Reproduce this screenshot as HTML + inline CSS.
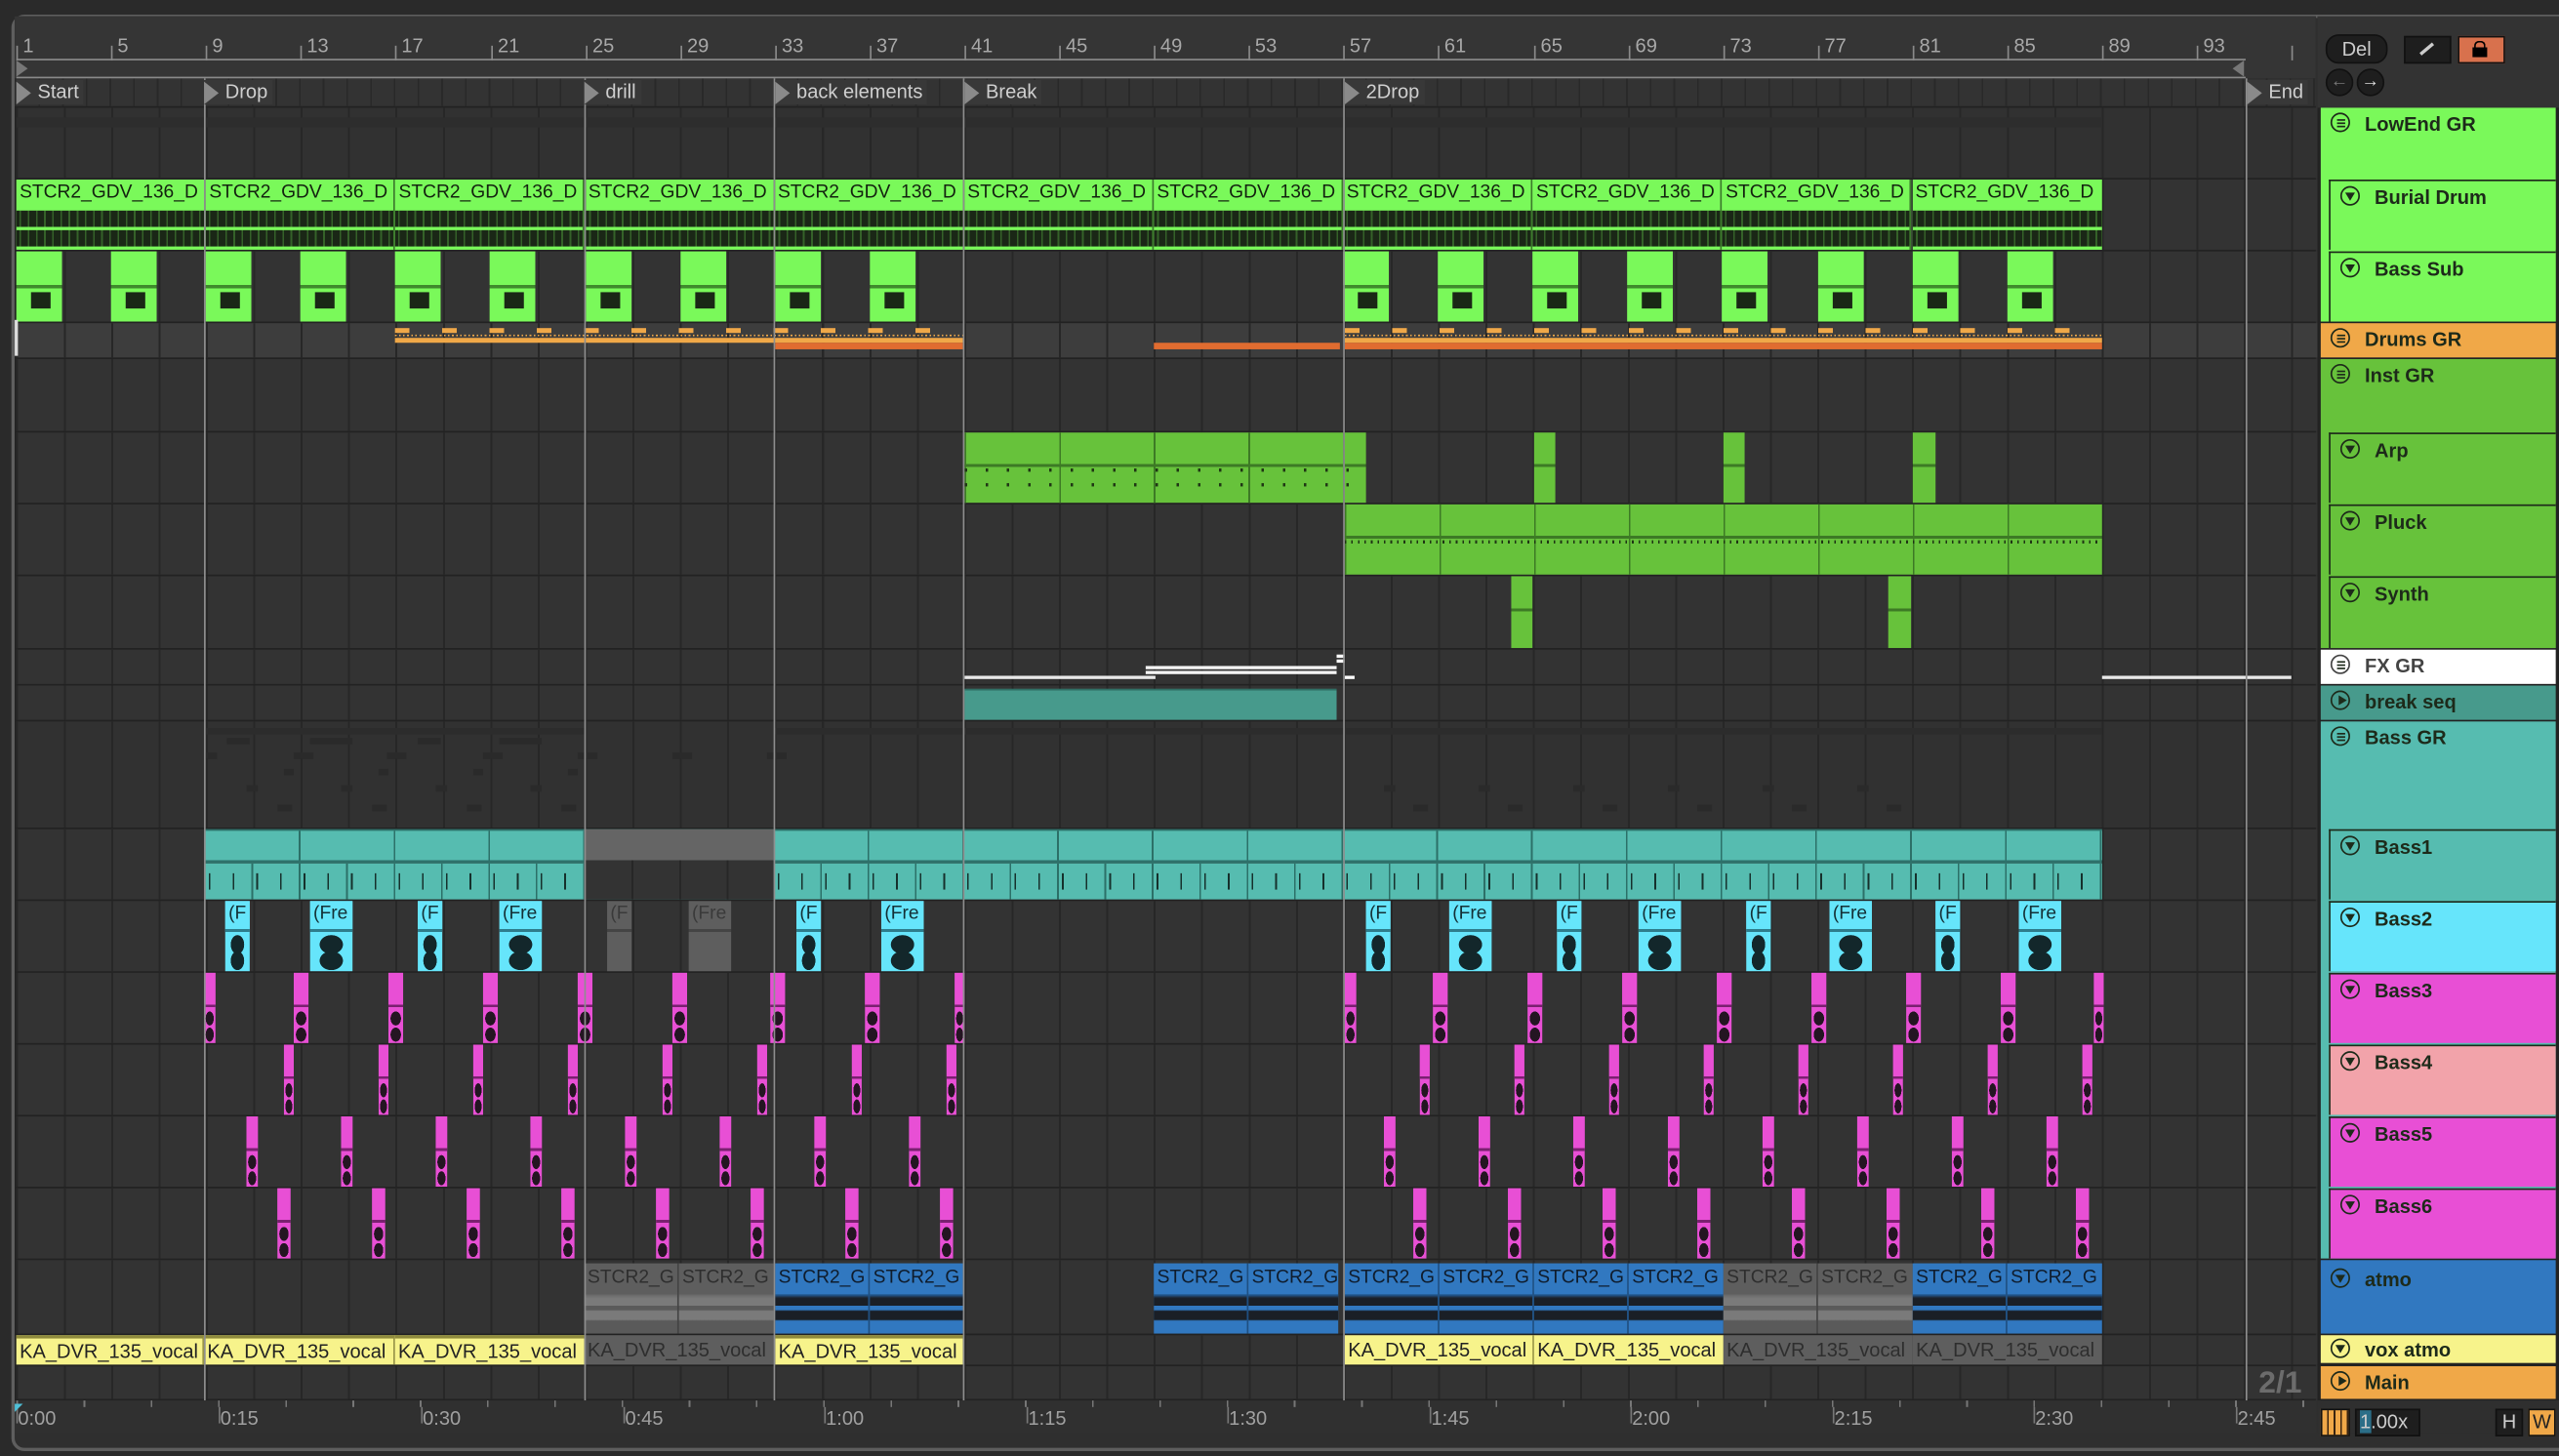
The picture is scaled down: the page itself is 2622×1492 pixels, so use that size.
<!DOCTYPE html>
<html><head><meta charset="utf-8">
<style>
html,body{margin:0;padding:0;background:#262626;overflow:hidden;width:2622px;height:1492px}
#s{position:absolute;left:0;top:0;width:1568px;height:892px;transform-origin:0 0;transform:scale(1.67219,1.67265);font-family:"Liberation Sans",sans-serif;}
.a{position:absolute}
#panel{position:absolute;left:7px;top:9px;width:1570px;height:880px;border:2px solid #5e5e5e;border-radius:8px;background:#2f2f2f;box-sizing:border-box}
.num{position:absolute;top:21px;font-size:12px;color:#a8a8a8;font-family:"Liberation Sans Narrow","Liberation Sans",sans-serif}
.tk{position:absolute;top:28px;width:1px;height:9px;background:#8a8a8a}
.row{position:absolute;left:10px;width:1410px;background:#333;
 background-image:repeating-linear-gradient(90deg,#272727 0 1.2px,transparent 1.2px 29.04px);}
.c{position:absolute;top:0;height:100%;box-sizing:border-box;overflow:hidden}
.h{position:absolute;left:0;right:0;top:0;font-size:11.5px;line-height:17px;padding-left:2px;white-space:nowrap;overflow:hidden;font-family:"Liberation Sans Narrow","Liberation Sans",sans-serif}
.w{position:absolute;left:0;right:0;bottom:0}
.bw{position:absolute;left:0;right:0;top:19px;height:22px;background-color:#1a2716;background-image:repeating-linear-gradient(90deg,transparent 0 2px,rgba(122,249,90,.28) 2px 3px,transparent 3px 5px)}
.bw:after{content:"";position:absolute;left:0;right:0;top:10px;height:2px;background:#7af95a}
.loc{position:absolute;top:48px;width:1px;height:810px;background:#8e8e8e}
.lab{position:absolute;top:49px;font-size:12px;color:#cfcfcf;height:15px;line-height:15px;padding-left:13px;background:#383838}
.lab:before{content:"";position:absolute;left:0;top:1px;border-left:9px solid #8a8a8a;border-top:7px solid transparent;border-bottom:7px solid transparent}
.th{position:absolute;box-sizing:border-box;font-weight:bold;font-size:12px;color:#1d2a1a;padding-left:27px;padding-top:3px;line-height:14px}
.ic{position:absolute;left:6px;top:3px;width:12px;height:12px;border:1.4px solid #1d2a1a;border-radius:50%;box-sizing:border-box}
.dn:after{content:"";position:absolute;left:2.3px;top:3.2px;border-top:5px solid #1d2a1a;border-left:3.2px solid transparent;border-right:3.2px solid transparent}
.pl:after{content:"";position:absolute;left:3.6px;top:2.3px;border-left:5px solid #1d2a1a;border-top:3.2px solid transparent;border-bottom:3.2px solid transparent}
.gr:after{content:"";position:absolute;left:2.5px;top:2.6px;width:5px;height:1.2px;background:#1d2a1a;box-shadow:0 2px 0 #1d2a1a,0 4px 0 #1d2a1a}
.tl{position:absolute;top:862px;font-size:12px;color:#a0a0a0}
.bt{position:absolute;top:868px;width:1px;height:6px;background:#777}
.gb{position:absolute;height:4px;background:#2a2a2a}
</style></head><body><div id="s">
<div class="a" style="left:0;top:0;width:1568px;height:892px;background:#2a2a2a"></div>
<div id="panel"></div>
<div class="a" style="left:9px;top:10px;width:1410px;height:848px;background:#222"></div>
<div class="a" style="left:9px;top:10px;width:1410px;height:38px;background:#353535"></div>
<div class="a" style="left:9px;top:48px;width:1410px;height:17px;background:#333;background-image:repeating-linear-gradient(90deg,#292929 0 1px,transparent 1px 14.52px)"></div>
<div class="a" style="left:1420px;top:10px;width:148px;height:56px;background:#333"></div>

<div class="tk" style="left:10px"></div><div class="num" style="left:14px">1</div>
<div class="tk" style="left:68px"></div><div class="num" style="left:72px">5</div>
<div class="tk" style="left:126px"></div><div class="num" style="left:130px">9</div>
<div class="tk" style="left:184px"></div><div class="num" style="left:188px">13</div>
<div class="tk" style="left:242px"></div><div class="num" style="left:246px">17</div>
<div class="tk" style="left:301px"></div><div class="num" style="left:305px">21</div>
<div class="tk" style="left:359px"></div><div class="num" style="left:363px">25</div>
<div class="tk" style="left:417px"></div><div class="num" style="left:421px">29</div>
<div class="tk" style="left:475px"></div><div class="num" style="left:479px">33</div>
<div class="tk" style="left:533px"></div><div class="num" style="left:537px">37</div>
<div class="tk" style="left:591px"></div><div class="num" style="left:595px">41</div>
<div class="tk" style="left:649px"></div><div class="num" style="left:653px">45</div>
<div class="tk" style="left:707px"></div><div class="num" style="left:711px">49</div>
<div class="tk" style="left:765px"></div><div class="num" style="left:769px">53</div>
<div class="tk" style="left:823px"></div><div class="num" style="left:827px">57</div>
<div class="tk" style="left:881px"></div><div class="num" style="left:885px">61</div>
<div class="tk" style="left:940px"></div><div class="num" style="left:944px">65</div>
<div class="tk" style="left:998px"></div><div class="num" style="left:1002px">69</div>
<div class="tk" style="left:1056px"></div><div class="num" style="left:1060px">73</div>
<div class="tk" style="left:1114px"></div><div class="num" style="left:1118px">77</div>
<div class="tk" style="left:1172px"></div><div class="num" style="left:1176px">81</div>
<div class="tk" style="left:1230px"></div><div class="num" style="left:1234px">85</div>
<div class="tk" style="left:1288px"></div><div class="num" style="left:1292px">89</div>
<div class="tk" style="left:1346px"></div><div class="num" style="left:1350px">93</div>
<div class="tk" style="left:1404px"></div>
<div class="a" style="left:10px;top:36px;width:1366px;height:1px;background:#8a8a8a"></div>
<div class="a" style="left:10px;top:47px;width:1366px;height:1px;background:#8a8a8a"></div>
<div class="a" style="left:10px;top:37px;width:0;height:0;border-left:7px solid #777;border-top:5px solid transparent;border-bottom:5px solid transparent"></div>
<div class="a" style="left:1368px;top:37px;width:0;height:0;border-right:7px solid #777;border-top:5px solid transparent;border-bottom:5px solid transparent"></div>

<div class="row" style="top:66px;height:43px;background-color:#313131"></div>
<div class="a" style="left:10px;top:72px;width:1278px;height:6px;background:#2d2d2d"></div>
<div class="row" style="top:110px;height:43px"></div>
<div class="row" style="top:154px;height:43px"></div>
<div class="row" style="top:198px;height:21px;background-color:#3d3d3d"></div>
<div class="row" style="top:220px;height:44px"></div>
<div class="row" style="top:265px;height:43px"></div>
<div class="row" style="top:309px;height:43px"></div>
<div class="row" style="top:353px;height:44px"></div>
<div class="row" style="top:398px;height:21px"></div>
<div class="row" style="top:420px;height:21px"></div>
<div class="row" style="top:442px;height:65px;background-color:#313131"></div>
<div class="a" style="left:125px;top:446px;width:233px;height:4px;background:#2c2c2c"></div>
<div class="a" style="left:475px;top:446px;width:813px;height:4px;background:#2c2c2c"></div>
<div class="gb" style="left:139px;top:452px;width:14px"></div><div class="gb" style="left:190px;top:452px;width:26px"></div><div class="gb" style="left:256px;top:452px;width:14px"></div><div class="gb" style="left:306px;top:452px;width:26px"></div>
<div class="gb" style="left:126px;top:461px;width:7px"></div><div class="gb" style="left:180px;top:461px;width:12px"></div><div class="gb" style="left:237px;top:461px;width:12px"></div><div class="gb" style="left:296px;top:461px;width:12px"></div><div class="gb" style="left:354px;top:461px;width:12px"></div><div class="gb" style="left:412px;top:461px;width:12px"></div><div class="gb" style="left:470px;top:461px;width:12px"></div>
<div class="gb" style="left:174px;top:471px;width:6px"></div><div class="gb" style="left:232px;top:471px;width:6px"></div><div class="gb" style="left:290px;top:471px;width:6px"></div><div class="gb" style="left:348px;top:471px;width:6px"></div>
<div class="gb" style="left:151px;top:481px;width:7px"></div><div class="gb" style="left:209px;top:481px;width:7px"></div><div class="gb" style="left:267px;top:481px;width:7px"></div><div class="gb" style="left:325px;top:481px;width:7px"></div>
<div class="gb" style="left:170px;top:493px;width:9px"></div><div class="gb" style="left:228px;top:493px;width:9px"></div><div class="gb" style="left:286px;top:493px;width:9px"></div><div class="gb" style="left:344px;top:493px;width:9px"></div>
<div class="gb" style="left:848px;top:481px;width:7px"></div><div class="gb" style="left:906px;top:481px;width:7px"></div><div class="gb" style="left:964px;top:481px;width:7px"></div><div class="gb" style="left:1022px;top:481px;width:7px"></div><div class="gb" style="left:1080px;top:481px;width:7px"></div><div class="gb" style="left:1138px;top:481px;width:7px"></div>
<div class="gb" style="left:866px;top:493px;width:9px"></div><div class="gb" style="left:924px;top:493px;width:9px"></div><div class="gb" style="left:982px;top:493px;width:9px"></div><div class="gb" style="left:1040px;top:493px;width:9px"></div><div class="gb" style="left:1098px;top:493px;width:9px"></div><div class="gb" style="left:1156px;top:493px;width:9px"></div>
<div class="row" style="top:508px;height:43px"></div>
<div class="row" style="top:552px;height:43px"></div>
<div class="row" style="top:596px;height:43px"></div>
<div class="row" style="top:640px;height:43px"></div>
<div class="row" style="top:684px;height:43px"></div>
<div class="row" style="top:728px;height:43px"></div>
<div class="row" style="top:772px;height:45px"></div>
<div class="row" style="top:818px;height:18px"></div>
<div class="row" style="top:837px;height:20px"></div>

<div class="a" style="left:10px;top:110px;width:1278px;height:43px">
<div class="c" style="left:0;width:116px;background:#7af95a;border-right:1px solid #3c7a2c"><div class="h" style="color:#13220f">STCR2_GDV_136_D</div><div class="bw"></div></div>
<div class="c" style="left:116.2px;width:116px;background:#7af95a;border-right:1px solid #3c7a2c"><div class="h" style="color:#13220f">STCR2_GDV_136_D</div><div class="bw"></div></div>
<div class="c" style="left:232.3px;width:116px;background:#7af95a;border-right:1px solid #3c7a2c"><div class="h" style="color:#13220f">STCR2_GDV_136_D</div><div class="bw"></div></div>
<div class="c" style="left:348.5px;width:116px;background:#7af95a;border-right:1px solid #3c7a2c"><div class="h" style="color:#13220f">STCR2_GDV_136_D</div><div class="bw"></div></div>
<div class="c" style="left:464.6px;width:116px;background:#7af95a;border-right:1px solid #3c7a2c"><div class="h" style="color:#13220f">STCR2_GDV_136_D</div><div class="bw"></div></div>
<div class="c" style="left:580.8px;width:116px;background:#7af95a;border-right:1px solid #3c7a2c"><div class="h" style="color:#13220f">STCR2_GDV_136_D</div><div class="bw"></div></div>
<div class="c" style="left:696.9px;width:116px;background:#7af95a;border-right:1px solid #3c7a2c"><div class="h" style="color:#13220f">STCR2_GDV_136_D</div><div class="bw"></div></div>
<div class="c" style="left:813.1px;width:116px;background:#7af95a;border-right:1px solid #3c7a2c"><div class="h" style="color:#13220f">STCR2_GDV_136_D</div><div class="bw"></div></div>
<div class="c" style="left:929.3px;width:116px;background:#7af95a;border-right:1px solid #3c7a2c"><div class="h" style="color:#13220f">STCR2_GDV_136_D</div><div class="bw"></div></div>
<div class="c" style="left:1045.4px;width:116px;background:#7af95a;border-right:1px solid #3c7a2c"><div class="h" style="color:#13220f">STCR2_GDV_136_D</div><div class="bw"></div></div>
<div class="c" style="left:1161.6px;width:116.4px;background:#7af95a"><div class="h" style="color:#13220f">STCR2_GDV_136_D</div><div class="bw"></div></div>
</div>

<div class="a" style="left:10px;top:154px;width:1278px;height:43px;--b:linear-gradient(#1a2716,#1a2716) 9px 25px/12px 10px no-repeat,linear-gradient(180deg,#7af95a 0 48%,#3f8a2c 48% 53%,#7af95a 53%)">
<div class="c" style="left:0;width:28px;background:var(--b)"></div>
<div class="c" style="left:58.1px;width:28px;background:var(--b)"></div>
<div class="c" style="left:116.2px;width:28px;background:var(--b)"></div>
<div class="c" style="left:174.2px;width:28px;background:var(--b)"></div>
<div class="c" style="left:232.3px;width:28px;background:var(--b)"></div>
<div class="c" style="left:290.4px;width:28px;background:var(--b)"></div>
<div class="c" style="left:348.5px;width:28px;background:var(--b)"></div>
<div class="c" style="left:406.6px;width:28px;background:var(--b)"></div>
<div class="c" style="left:464.6px;width:28px;background:var(--b)"></div>
<div class="c" style="left:522.7px;width:28px;background:var(--b)"></div>
<div class="c" style="left:813.1px;width:28px;background:var(--b)"></div>
<div class="c" style="left:871.2px;width:28px;background:var(--b)"></div>
<div class="c" style="left:929.3px;width:28px;background:var(--b)"></div>
<div class="c" style="left:987.4px;width:28px;background:var(--b)"></div>
<div class="c" style="left:1045.4px;width:28px;background:var(--b)"></div>
<div class="c" style="left:1103.5px;width:28px;background:var(--b)"></div>
<div class="c" style="left:1161.6px;width:28px;background:var(--b)"></div>
<div class="c" style="left:1219.7px;width:28px;background:var(--b)"></div>
</div>

<div class="a" style="left:242px;top:201px;width:348px;height:3px;background:repeating-linear-gradient(90deg,#f0a848 0 9px,transparent 9px 29px)"></div>
<div class="a" style="left:242px;top:205px;width:348px;height:1px;background:repeating-linear-gradient(90deg,#f0a848 0 1px,transparent 1px 2.5px)"></div>
<div class="a" style="left:242px;top:207px;width:348px;height:3px;background:#f0a848"></div>
<div class="a" style="left:475px;top:210px;width:115px;height:4px;background:#e06c30"></div>
<div class="a" style="left:707px;top:210px;width:114px;height:4px;background:#e06c30"></div>
<div class="a" style="left:824px;top:201px;width:464px;height:3px;background:repeating-linear-gradient(90deg,#f0a848 0 9px,transparent 9px 29px)"></div>
<div class="a" style="left:824px;top:205px;width:464px;height:1px;background:repeating-linear-gradient(90deg,#f0a848 0 1px,transparent 1px 2.5px)"></div>
<div class="a" style="left:824px;top:207px;width:464px;height:3px;background:#f0a848"></div>
<div class="a" style="left:824px;top:210px;width:464px;height:4px;background:#e06c30"></div>

<div class="a" style="left:591px;top:265px;width:246px;height:43px;background-image:repeating-linear-gradient(90deg,#3d7a25 0 1px,transparent 1px 58px),linear-gradient(180deg,#67c23b 0 45%,#3d7a25 45% 49%,#67c23b 49%)"></div>
<div class="a" style="left:591px;top:287px;width:246px;height:2px;background:repeating-linear-gradient(90deg,#1f3514 0 1.5px,transparent 1.5px 13px)"></div>
<div class="a" style="left:591px;top:296px;width:246px;height:2px;background:repeating-linear-gradient(90deg,#1f3514 0 1.5px,transparent 1.5px 13px)"></div>
<div class="a" style="left:940px;top:265px;width:13px;height:43px;background:linear-gradient(180deg,#67c23b 0 45%,#3d7a25 45% 49%,#67c23b 49%)"></div>
<div class="a" style="left:1056px;top:265px;width:13px;height:43px;background:linear-gradient(180deg,#67c23b 0 45%,#3d7a25 45% 49%,#67c23b 49%)"></div>
<div class="a" style="left:1172px;top:265px;width:14px;height:43px;background:linear-gradient(180deg,#67c23b 0 45%,#3d7a25 45% 49%,#67c23b 49%)"></div>
<div class="a" style="left:824px;top:309px;width:464px;height:43px;background-image:repeating-linear-gradient(90deg,#3d7a25 0 1px,transparent 1px 58px),linear-gradient(180deg,#67c23b 0 45%,#3d7a25 45% 49%,#67c23b 49%)"></div>
<div class="a" style="left:824px;top:331px;width:464px;height:2px;background:repeating-linear-gradient(90deg,#1f3514 0 1px,transparent 1px 4px)"></div>
<div class="a" style="left:926px;top:353px;width:13px;height:44px;background:linear-gradient(180deg,#67c23b 0 45%,#3d7a25 45% 49%,#67c23b 49%)"></div>
<div class="a" style="left:1157px;top:353px;width:14px;height:44px;background:linear-gradient(180deg,#67c23b 0 45%,#3d7a25 45% 49%,#67c23b 49%)"></div>
<div class="a" style="left:591px;top:414px;width:117px;height:2px;background:#e8e8e8"></div>
<div class="a" style="left:702px;top:408px;width:117px;height:2px;background:#f4f4f4"></div>
<div class="a" style="left:702px;top:411px;width:117px;height:2px;background:#f4f4f4"></div>
<div class="a" style="left:819px;top:401px;width:5px;height:2px;background:#fff"></div>
<div class="a" style="left:819px;top:404px;width:5px;height:2px;background:#fff"></div>
<div class="a" style="left:824px;top:414px;width:6px;height:2px;background:#fff"></div>
<div class="a" style="left:1288px;top:414px;width:116px;height:2px;background:#e8e8e8"></div>
<div class="a" style="left:591px;top:422px;width:228px;height:18px;background:#479a8c;border-top:1px solid #2f6e64"></div>

<div class="a" style="left:125px;top:508px;width:1163px;height:19px;background-image:repeating-linear-gradient(90deg,#2c7068 0 1px,transparent 1px 58.08px);background-color:#56bcb0;border-top:1px solid #2e716a;box-sizing:border-box"></div>
<div class="a" style="left:125px;top:527px;width:1163px;height:2px;background:#2e716a"></div>
<div class="a" style="left:125px;top:529px;width:1163px;height:22px;background-image:repeating-linear-gradient(90deg,#2c7068 0 1px,transparent 1px 29.04px);background-color:#56bcb0"></div>
<div class="a" style="left:125px;top:535px;width:1163px;height:10px;background:repeating-linear-gradient(90deg,transparent 0 3px,#16302c 3px 4px,transparent 4px 14.52px)"></div>
<div class="a" style="left:358px;top:508px;width:116px;height:19px;background:#656565"></div>
<div class="a" style="left:358px;top:527px;width:116px;height:24px;background:#333;background-image:repeating-linear-gradient(90deg,#272727 0 1.2px,transparent 1.2px 29.04px)"></div>

<div class="a" style="left:10px;top:552px;width:1278px;height:43px;--cy:linear-gradient(180deg,#66e5fb 0 40%,#2e7d8c 40% 44%,transparent 44%),radial-gradient(ellipse 45% 22% at 50% 62%,#13272b 60%,transparent 62%),radial-gradient(ellipse 45% 22% at 50% 85%,#13272b 60%,#66e5fb 62%)">
<div class="c" style="left:128px;width:15px;background:var(--cy)"><div class="h" style="color:#143036">(F</div></div>
<div class="c" style="left:180px;width:26px;background:var(--cy)"><div class="h" style="color:#143036">(Fre</div></div>
<div class="c" style="left:246px;width:15px;background:var(--cy)"><div class="h" style="color:#143036">(F</div></div>
<div class="c" style="left:296px;width:26px;background:var(--cy)"><div class="h" style="color:#143036">(Fre</div></div>
<div class="c" style="left:362px;width:15px;background:linear-gradient(180deg,#5e5e5e 0 40%,#444 40% 44%,#5e5e5e 44%)"><div class="h" style="color:#3a3a3a">(F</div></div>
<div class="c" style="left:412px;width:26px;background:linear-gradient(180deg,#5e5e5e 0 40%,#444 40% 44%,#5e5e5e 44%)"><div class="h" style="color:#3a3a3a">(Fre</div></div>
<div class="c" style="left:478px;width:15px;background:var(--cy)"><div class="h" style="color:#143036">(F</div></div>
<div class="c" style="left:530px;width:26px;background:var(--cy)"><div class="h" style="color:#143036">(Fre</div></div>
<div class="c" style="left:827px;width:15px;background:var(--cy)"><div class="h" style="color:#143036">(F</div></div>
<div class="c" style="left:878px;width:26px;background:var(--cy)"><div class="h" style="color:#143036">(Fre</div></div>
<div class="c" style="left:944px;width:15px;background:var(--cy)"><div class="h" style="color:#143036">(F</div></div>
<div class="c" style="left:994px;width:26px;background:var(--cy)"><div class="h" style="color:#143036">(Fre</div></div>
<div class="c" style="left:1060px;width:15px;background:var(--cy)"><div class="h" style="color:#143036">(F</div></div>
<div class="c" style="left:1111px;width:26px;background:var(--cy)"><div class="h" style="color:#143036">(Fre</div></div>
<div class="c" style="left:1176px;width:15px;background:var(--cy)"><div class="h" style="color:#143036">(F</div></div>
<div class="c" style="left:1227px;width:26px;background:var(--cy)"><div class="h" style="color:#143036">(Fre</div></div>
</div>

<div class="a" style="left:0;top:596px;width:1300px;height:43px;--m:linear-gradient(180deg,#e84fd5 0 45%,#7a2070 45% 49%,transparent 49%),radial-gradient(ellipse 50% 14% at 50% 65%,#241522 70%,transparent 72%),radial-gradient(ellipse 50% 14% at 50% 88%,#241522 70%,#e84fd5 72%)">
<div class="c" style="left:125px;width:7px;background:var(--m)"></div><div class="c" style="left:180px;width:9px;background:var(--m)"></div><div class="c" style="left:238px;width:9px;background:var(--m)"></div><div class="c" style="left:296px;width:9px;background:var(--m)"></div><div class="c" style="left:354px;width:9px;background:var(--m)"></div><div class="c" style="left:412px;width:9px;background:var(--m)"></div><div class="c" style="left:472px;width:9px;background:var(--m)"></div><div class="c" style="left:530px;width:9px;background:var(--m)"></div><div class="c" style="left:585px;width:6px;background:var(--m)"></div>
<div class="c" style="left:824px;width:7px;background:var(--m)"></div><div class="c" style="left:878px;width:9px;background:var(--m)"></div><div class="c" style="left:936px;width:9px;background:var(--m)"></div><div class="c" style="left:994px;width:9px;background:var(--m)"></div><div class="c" style="left:1052px;width:9px;background:var(--m)"></div><div class="c" style="left:1110px;width:9px;background:var(--m)"></div><div class="c" style="left:1168px;width:9px;background:var(--m)"></div><div class="c" style="left:1226px;width:9px;background:var(--m)"></div><div class="c" style="left:1283px;width:6px;background:var(--m)"></div>
</div>
<div class="a" style="left:0;top:640px;width:1300px;height:43px;--m:linear-gradient(180deg,#e84fd5 0 45%,#7a2070 45% 49%,transparent 49%),radial-gradient(ellipse 50% 14% at 50% 65%,#241522 70%,transparent 72%),radial-gradient(ellipse 50% 14% at 50% 88%,#241522 70%,#e84fd5 72%)">
<div class="c" style="left:174px;width:6px;background:var(--m)"></div><div class="c" style="left:232px;width:6px;background:var(--m)"></div><div class="c" style="left:290px;width:6px;background:var(--m)"></div><div class="c" style="left:348px;width:6px;background:var(--m)"></div><div class="c" style="left:406px;width:6px;background:var(--m)"></div><div class="c" style="left:464px;width:6px;background:var(--m)"></div><div class="c" style="left:522px;width:6px;background:var(--m)"></div><div class="c" style="left:580px;width:6px;background:var(--m)"></div>
<div class="c" style="left:870px;width:6px;background:var(--m)"></div><div class="c" style="left:928px;width:6px;background:var(--m)"></div><div class="c" style="left:986px;width:6px;background:var(--m)"></div><div class="c" style="left:1044px;width:6px;background:var(--m)"></div><div class="c" style="left:1102px;width:6px;background:var(--m)"></div><div class="c" style="left:1160px;width:6px;background:var(--m)"></div><div class="c" style="left:1218px;width:6px;background:var(--m)"></div><div class="c" style="left:1276px;width:6px;background:var(--m)"></div>
</div>
<div class="a" style="left:0;top:684px;width:1300px;height:43px;--m:linear-gradient(180deg,#e84fd5 0 45%,#7a2070 45% 49%,transparent 49%),radial-gradient(ellipse 50% 14% at 50% 65%,#241522 70%,transparent 72%),radial-gradient(ellipse 50% 14% at 50% 88%,#241522 70%,#e84fd5 72%)">
<div class="c" style="left:151px;width:7px;background:var(--m)"></div><div class="c" style="left:209px;width:7px;background:var(--m)"></div><div class="c" style="left:267px;width:7px;background:var(--m)"></div><div class="c" style="left:325px;width:7px;background:var(--m)"></div><div class="c" style="left:383px;width:7px;background:var(--m)"></div><div class="c" style="left:441px;width:7px;background:var(--m)"></div><div class="c" style="left:499px;width:7px;background:var(--m)"></div><div class="c" style="left:557px;width:7px;background:var(--m)"></div>
<div class="c" style="left:848px;width:7px;background:var(--m)"></div><div class="c" style="left:906px;width:7px;background:var(--m)"></div><div class="c" style="left:964px;width:7px;background:var(--m)"></div><div class="c" style="left:1022px;width:7px;background:var(--m)"></div><div class="c" style="left:1080px;width:7px;background:var(--m)"></div><div class="c" style="left:1138px;width:7px;background:var(--m)"></div><div class="c" style="left:1196px;width:7px;background:var(--m)"></div><div class="c" style="left:1254px;width:7px;background:var(--m)"></div>
</div>
<div class="a" style="left:0;top:728px;width:1300px;height:43px;--m:linear-gradient(180deg,#e84fd5 0 45%,#7a2070 45% 49%,transparent 49%),radial-gradient(ellipse 50% 14% at 50% 65%,#241522 70%,transparent 72%),radial-gradient(ellipse 50% 14% at 50% 88%,#241522 70%,#e84fd5 72%)">
<div class="c" style="left:170px;width:8px;background:var(--m)"></div><div class="c" style="left:228px;width:8px;background:var(--m)"></div><div class="c" style="left:286px;width:8px;background:var(--m)"></div><div class="c" style="left:344px;width:8px;background:var(--m)"></div><div class="c" style="left:402px;width:8px;background:var(--m)"></div><div class="c" style="left:460px;width:8px;background:var(--m)"></div><div class="c" style="left:518px;width:8px;background:var(--m)"></div><div class="c" style="left:576px;width:8px;background:var(--m)"></div>
<div class="c" style="left:866px;width:8px;background:var(--m)"></div><div class="c" style="left:924px;width:8px;background:var(--m)"></div><div class="c" style="left:982px;width:8px;background:var(--m)"></div><div class="c" style="left:1040px;width:8px;background:var(--m)"></div><div class="c" style="left:1098px;width:8px;background:var(--m)"></div><div class="c" style="left:1156px;width:8px;background:var(--m)"></div><div class="c" style="left:1214px;width:8px;background:var(--m)"></div><div class="c" style="left:1272px;width:8px;background:var(--m)"></div>
</div>

<div class="a" style="left:0;top:774px;width:1300px;height:43px;--bl:linear-gradient(180deg,transparent 0 40%,#1a1f26 50% 60%,transparent 60% 66%,#1a1f26 68% 80%,transparent 82%) ,#3178c0;--gy:linear-gradient(180deg,transparent 0 40%,#7a7a7a 50% 60%,transparent 60% 66%,#7a7a7a 68% 80%,transparent 82%),#5a5a5a">
<div class="c" style="left:358px;width:58px;background:var(--gy);border-right:1px solid #444"><div class="h" style="color:#2e2e2e;background:#5e5e5e;line-height:19px">STCR2_G</div></div>
<div class="c" style="left:416px;width:58px;background:var(--gy)"><div class="h" style="color:#2e2e2e;background:#5e5e5e;line-height:19px">STCR2_G</div></div>
<div class="c" style="left:475px;width:58px;background:var(--bl);border-right:1px solid #1f4f80"><div class="h" style="color:#0f1c2c;background:#3178c0;line-height:19px;border-bottom:1px solid #1f4f80">STCR2_G</div></div>
<div class="c" style="left:533px;width:57px;background:var(--bl)"><div class="h" style="color:#0f1c2c;background:#3178c0;line-height:19px;border-bottom:1px solid #1f4f80">STCR2_G</div></div>
<div class="c" style="left:707px;width:58px;background:var(--bl);border-right:1px solid #1f4f80"><div class="h" style="color:#0f1c2c;background:#3178c0;line-height:19px;border-bottom:1px solid #1f4f80">STCR2_G</div></div>
<div class="c" style="left:765px;width:55px;background:var(--bl)"><div class="h" style="color:#0f1c2c;background:#3178c0;line-height:19px;border-bottom:1px solid #1f4f80">STCR2_G</div></div>
<div class="c" style="left:824px;width:58px;background:var(--bl);border-right:1px solid #1f4f80"><div class="h" style="color:#0f1c2c;background:#3178c0;line-height:19px;border-bottom:1px solid #1f4f80">STCR2_G</div></div>
<div class="c" style="left:882px;width:58px;background:var(--bl);border-right:1px solid #1f4f80"><div class="h" style="color:#0f1c2c;background:#3178c0;line-height:19px;border-bottom:1px solid #1f4f80">STCR2_G</div></div>
<div class="c" style="left:940px;width:58px;background:var(--bl);border-right:1px solid #1f4f80"><div class="h" style="color:#0f1c2c;background:#3178c0;line-height:19px;border-bottom:1px solid #1f4f80">STCR2_G</div></div>
<div class="c" style="left:998px;width:58px;background:var(--bl)"><div class="h" style="color:#0f1c2c;background:#3178c0;line-height:19px;border-bottom:1px solid #1f4f80">STCR2_G</div></div>
<div class="c" style="left:1056px;width:58px;background:var(--gy);border-right:1px solid #444"><div class="h" style="color:#2e2e2e;background:#5e5e5e;line-height:19px">STCR2_G</div></div>
<div class="c" style="left:1114px;width:58px;background:var(--gy)"><div class="h" style="color:#2e2e2e;background:#5e5e5e;line-height:19px">STCR2_G</div></div>
<div class="c" style="left:1172px;width:58px;background:var(--bl);border-right:1px solid #1f4f80"><div class="h" style="color:#0f1c2c;background:#3178c0;line-height:19px;border-bottom:1px solid #1f4f80">STCR2_G</div></div>
<div class="c" style="left:1230px;width:58px;background:var(--bl)"><div class="h" style="color:#0f1c2c;background:#3178c0;line-height:19px;border-bottom:1px solid #1f4f80">STCR2_G</div></div>
</div>

<div class="a" style="left:0;top:818px;width:1300px;height:18px">
<div class="c" style="left:10px;width:115px;background:#f7f38b;border-top:2px solid #8e8a3c;border-right:1px solid #9a9648"><div class="h" style="color:#222;line-height:16px;font-size:12px">KA_DVR_135_vocal</div></div>
<div class="c" style="left:125px;width:117px;background:#f7f38b;border-top:2px solid #8e8a3c;border-right:1px solid #9a9648"><div class="h" style="color:#222;line-height:16px;font-size:12px">KA_DVR_135_vocal</div></div>
<div class="c" style="left:242px;width:116px;background:#f7f38b;border-top:2px solid #8e8a3c"><div class="h" style="color:#222;line-height:16px;font-size:12px">KA_DVR_135_vocal</div></div>
<div class="c" style="left:358px;width:116px;background:#5e5e5e"><div class="h" style="color:#2e2e2e;line-height:18px;font-size:12px">KA_DVR_135_vocal</div></div>
<div class="c" style="left:475px;width:115px;background:#f7f38b;border-top:2px solid #8e8a3c"><div class="h" style="color:#222;line-height:16px;font-size:12px">KA_DVR_135_vocal</div></div>
<div class="c" style="left:824px;width:116px;background:#f7f38b;border-right:1px solid #9a9648"><div class="h" style="color:#222;line-height:18px;font-size:12px">KA_DVR_135_vocal</div></div>
<div class="c" style="left:940px;width:116px;background:#f7f38b"><div class="h" style="color:#222;line-height:18px;font-size:12px">KA_DVR_135_vocal</div></div>
<div class="c" style="left:1056px;width:116px;background:#5e5e5e"><div class="h" style="color:#2e2e2e;line-height:18px;font-size:12px">KA_DVR_135_vocal</div></div>
<div class="c" style="left:1172px;width:116px;background:#5e5e5e"><div class="h" style="color:#2e2e2e;line-height:18px;font-size:12px">KA_DVR_135_vocal</div></div>
</div>

<div class="loc" style="left:125px"></div><div class="loc" style="left:358px"></div><div class="loc" style="left:474px"></div><div class="loc" style="left:590px"></div><div class="loc" style="left:823px"></div><div class="loc" style="left:1376px"></div>
<div class="a" style="left:9px;top:196px;width:2px;height:22px;background:#ddd"></div>
<div class="lab" style="left:10px;padding-right:3px">Start</div>
<div class="lab" style="left:125px;padding-right:3px">Drop</div>
<div class="lab" style="left:358px;padding-right:3px">drill</div>
<div class="lab" style="left:475px;padding-right:3px">back elements</div>
<div class="lab" style="left:591px;padding-right:3px">Break</div>
<div class="lab" style="left:824px;padding-right:3px">2Drop</div>
<div class="lab" style="left:1377px;padding-right:3px">End</div>

<div class="a" style="left:9px;top:858px;width:1410px;height:20px;background:#303030"></div>
<div class="bt" style="left:10px;top:862px;height:10px"></div><div class="tl" style="left:11px">0:00</div>
<div class="bt" style="left:134px;top:862px;height:10px"></div><div class="tl" style="left:135px">0:15</div>
<div class="bt" style="left:258px;top:862px;height:10px"></div><div class="tl" style="left:259px">0:30</div>
<div class="bt" style="left:382px;top:862px;height:10px"></div><div class="tl" style="left:383px">0:45</div>
<div class="bt" style="left:505px;top:862px;height:10px"></div><div class="tl" style="left:506px">1:00</div>
<div class="bt" style="left:629px;top:862px;height:10px"></div><div class="tl" style="left:630px">1:15</div>
<div class="bt" style="left:752px;top:862px;height:10px"></div><div class="tl" style="left:753px">1:30</div>
<div class="bt" style="left:876px;top:862px;height:10px"></div><div class="tl" style="left:877px">1:45</div>
<div class="bt" style="left:999px;top:862px;height:10px"></div><div class="tl" style="left:1000px">2:00</div>
<div class="bt" style="left:1123px;top:862px;height:10px"></div><div class="tl" style="left:1124px">2:15</div>
<div class="bt" style="left:1246px;top:862px;height:10px"></div><div class="tl" style="left:1247px">2:30</div>
<div class="bt" style="left:1370px;top:862px;height:10px"></div><div class="tl" style="left:1371px">2:45</div>
<div class="a" style="left:10px;top:858px;width:1410px;height:4px;background:repeating-linear-gradient(90deg,#777 0 1px,transparent 1px 41.2px)"></div>
<div class="a" style="left:1384px;top:837px;font-size:19px;font-weight:bold;color:#6c6c6c">2/1</div>

<div class="a" style="left:1420px;top:66px;width:148px;height:792px;background:#222"></div>
<div class="th" style="left:1422px;top:66px;width:144px;height:131px;background:#7af95a"><span class="ic gr"></span>LowEnd GR</div>
<div class="th" style="left:1427px;top:110px;width:139px;height:43px;background:#7af95a;border-left:1.5px solid #1d2a1a;border-top:1.5px solid #1d2a1a;padding-top:3px"><span class="ic dn"></span>Burial Drum</div>
<div class="th" style="left:1427px;top:154px;width:139px;height:43px;background:#7af95a;border-left:1.5px solid #1d2a1a;border-top:1.5px solid #1d2a1a"><span class="ic dn"></span>Bass Sub</div>
<div class="th" style="left:1422px;top:198px;width:144px;height:21px;background:#f0a848"><span class="ic gr"></span>Drums GR</div>
<div class="th" style="left:1422px;top:220px;width:144px;height:177px;background:#67c23b"><span class="ic gr"></span>Inst GR</div>
<div class="th" style="left:1427px;top:265px;width:139px;height:43px;background:#67c23b;border-left:1.5px solid #1d2a1a;border-top:1.5px solid #1d2a1a"><span class="ic dn"></span>Arp</div>
<div class="th" style="left:1427px;top:309px;width:139px;height:43px;background:#67c23b;border-left:1.5px solid #1d2a1a;border-top:1.5px solid #1d2a1a"><span class="ic dn"></span>Pluck</div>
<div class="th" style="left:1427px;top:353px;width:139px;height:44px;background:#67c23b;border-left:1.5px solid #1d2a1a;border-top:1.5px solid #1d2a1a"><span class="ic dn"></span>Synth</div>
<div class="th" style="left:1422px;top:398px;width:144px;height:21px;background:#fff;color:#444"><span class="ic gr" style="border-color:#444"></span>FX GR</div>
<div class="th" style="left:1422px;top:420px;width:144px;height:21px;background:#479a8c"><span class="ic pl"></span>break seq</div>
<div class="th" style="left:1422px;top:442px;width:144px;height:329px;background:#56bcb0"><span class="ic gr"></span>Bass GR</div>
<div class="th" style="left:1427px;top:508px;width:139px;height:43px;background:#56bcb0;border-left:1.5px solid #1d2a1a;border-top:1.5px solid #1d2a1a"><span class="ic dn"></span>Bass1</div>
<div class="th" style="left:1427px;top:552px;width:139px;height:43px;background:#66e5fb;border-left:1.5px solid #1d2a1a;border-top:1.5px solid #1d2a1a"><span class="ic dn"></span>Bass2</div>
<div class="th" style="left:1427px;top:596px;width:139px;height:43px;background:#e84fd5;border-left:1.5px solid #1d2a1a;border-top:1.5px solid #1d2a1a"><span class="ic dn"></span>Bass3</div>
<div class="th" style="left:1427px;top:640px;width:139px;height:43px;background:#f2a3aa;border-left:1.5px solid #1d2a1a;border-top:1.5px solid #1d2a1a"><span class="ic dn"></span>Bass4</div>
<div class="th" style="left:1427px;top:684px;width:139px;height:43px;background:#e84fd5;border-left:1.5px solid #1d2a1a;border-top:1.5px solid #1d2a1a"><span class="ic dn"></span>Bass5</div>
<div class="th" style="left:1427px;top:728px;width:139px;height:43px;background:#e84fd5;border-left:1.5px solid #1d2a1a;border-top:1.5px solid #1d2a1a"><span class="ic dn"></span>Bass6</div>
<div class="th" style="left:1422px;top:772px;width:144px;height:45px;background:#3178c0;padding-top:5px"><span class="ic dn" style="top:5px"></span>atmo</div>
<div class="th" style="left:1422px;top:818px;width:144px;height:17px;background:#f7f38b;padding-top:2px;overflow:hidden"><span class="ic dn" style="top:2px"></span>vox atmo</div>
<div class="th" style="left:1422px;top:837px;width:144px;height:20px;background:#f0a848;padding-top:3px"><span class="ic pl"></span>Main</div>

<div class="a" style="left:1425px;top:21px;width:36px;height:16px;border-radius:8px;background:#1e1e1e;border:1px solid #111;color:#ccc;font-size:12px;text-align:center;line-height:16px">Del</div>
<div class="a" style="left:1473px;top:22px;width:27px;height:15px;background:#1e1e1e;border:1px solid #111"></div>
<div class="a" style="left:1482px;top:29px;width:10px;height:2px;background:#ccc;transform:rotate(-40deg)"></div>
<div class="a" style="left:1506px;top:22px;width:27px;height:15px;background:#d8714d;border:1px solid #111"></div>
<div class="a" style="left:1515px;top:29px;width:9px;height:6px;background:#000"></div>
<div class="a" style="left:1516px;top:25px;width:5px;height:5px;border:1.5px solid #000;border-bottom:none;border-radius:3px 3px 0 0"></div>
<div class="a" style="left:1425px;top:42px;width:15px;height:15px;border-radius:50%;background:#1e1e1e;border:1px solid #111;color:#777;font-size:11px;text-align:center;line-height:15px">&#8592;</div>
<div class="a" style="left:1444px;top:42px;width:15px;height:15px;border-radius:50%;background:#1e1e1e;border:1px solid #111;color:#ddd;font-size:11px;text-align:center;line-height:15px">&#8594;</div>

<div class="a" style="left:1420px;top:858px;width:148px;height:20px;background:#2f2f2f"></div>
<div class="a" style="left:1422px;top:863px;width:18px;height:17px;background:#f0a848;border:1px solid #111;box-sizing:border-box;background-image:repeating-linear-gradient(90deg,transparent 0 3px,#3a2410 3px 4px)"></div>
<div class="a" style="left:1443px;top:863px;width:40px;height:17px;background:#1e1e1e;border:1px solid #111;box-sizing:border-box;color:#ccc;font-size:12px;line-height:15px;padding-left:2px"><span style="background:#2b6e88;color:#ccc">1</span>.00x</div>
<div class="a" style="left:1529px;top:863px;width:17px;height:17px;background:#1e1e1e;border:1px solid #111;box-sizing:border-box;color:#ccc;font-size:12px;line-height:15px;text-align:center">H</div>
<div class="a" style="left:1549px;top:863px;width:17px;height:17px;background:#f0a848;border:1px solid #111;box-sizing:border-box;color:#222;font-size:12px;line-height:15px;text-align:center">W</div>
<div class="a" style="left:9px;top:860px;width:0;height:0;border-left:5px solid #4fc0d8;border-bottom:5px solid transparent"></div>
</div></body></html>
